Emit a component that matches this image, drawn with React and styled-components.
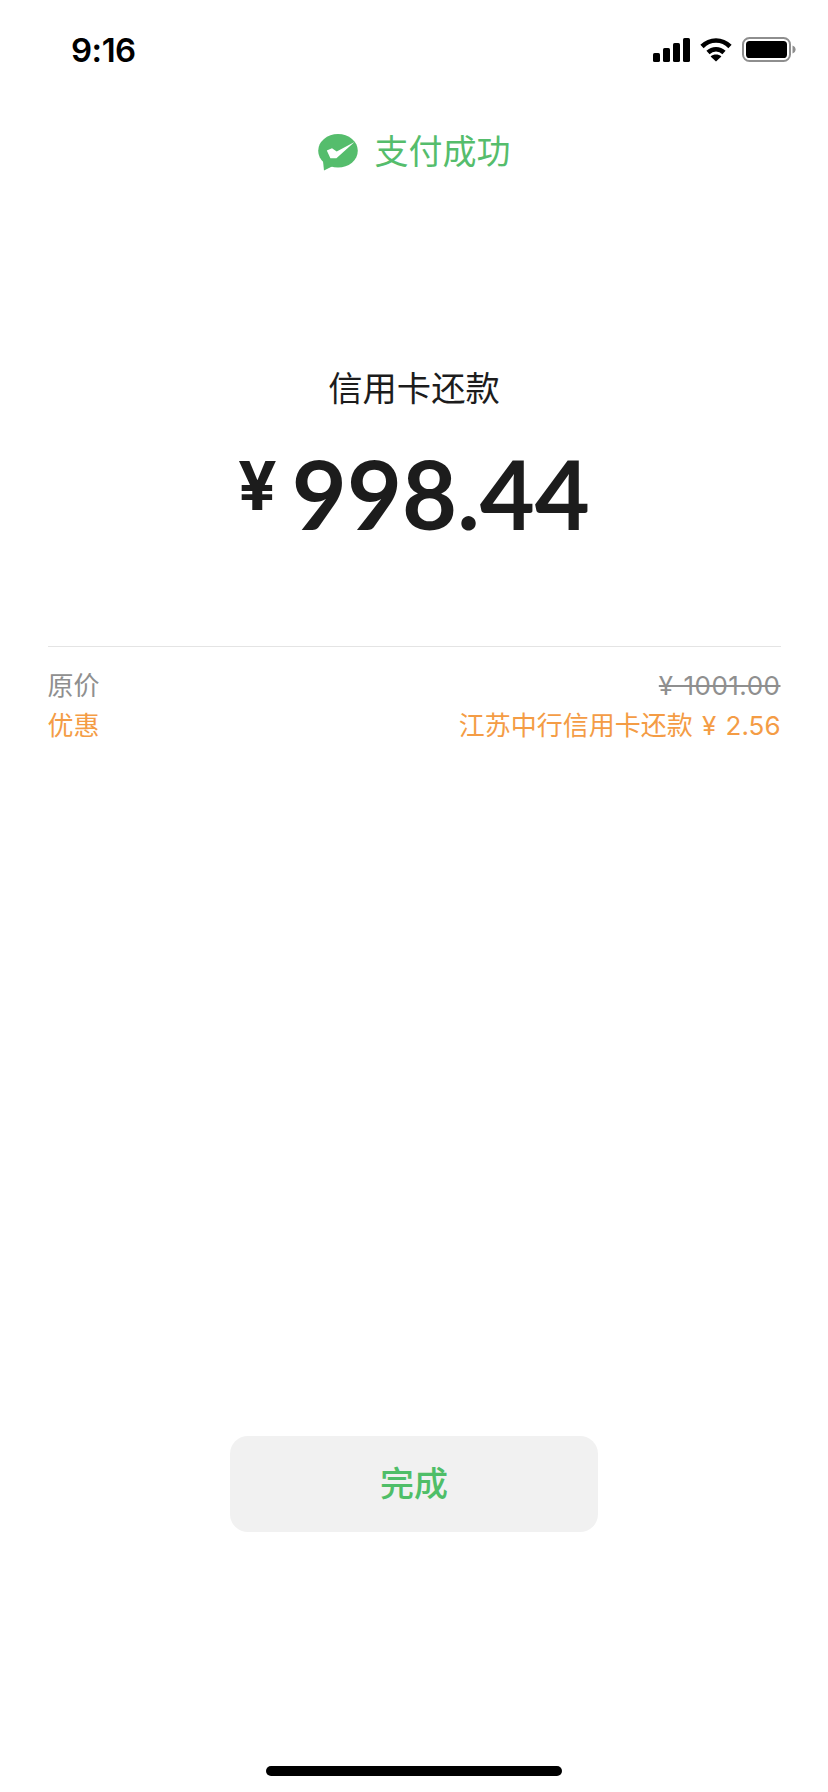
import React from "react";
import styled, { createGlobalStyle } from "styled-components";

const cjk = `"Noto Sans CJK SC", "Noto Sans", sans-serif`;

const GlobalStyle = createGlobalStyle`
  html, body {
    margin: 0;
    padding: 0;
    background: #ffffff;
  }
`;

const SignalIcon = () => (
  <svg width="37" height="24" viewBox="0 0 37 24" fill="#000">
    <rect x="0" y="15" width="7" height="9" rx="1.6" />
    <rect x="10" y="10" width="7" height="14" rx="1.6" />
    <rect x="20" y="5" width="7" height="19" rx="1.6" />
    <rect x="30" y="0" width="7" height="24" rx="1.6" />
  </svg>
);

const WifiIcon = () => (
  <svg width="32" height="25" viewBox="0 0 32 25" fill="none" stroke="#000" strokeWidth="4.6">
    <path d="M2 9.5C10 1.5 22 1.5 30 9.5" />
    <path d="M8 15.5C12.5 11.2 19.5 11.2 24 15.5" />
    <path d="M10.6 19.4L16 24.4L21.4 19.4C18.4 16.8 13.6 16.8 10.6 19.4Z" fill="#000" stroke="none" />
  </svg>
);

const BatteryIcon = () => (
  <svg width="54" height="25" viewBox="0 0 54 25">
    <rect x="1" y="1" width="47" height="23" rx="6.5" fill="none" stroke="#8e8e8e" strokeWidth="2" />
    <rect x="4" y="4" width="41" height="17" rx="3.6" fill="#000" />
    <path d="M50.5 8.5C52.5 9.2 53.6 10.6 53.6 12.5C53.6 14.4 52.5 15.8 50.5 16.5Z" fill="#8e8e8e" />
  </svg>
);

const PayLogo = () => (
  <svg width="40" height="37" viewBox="0 0 40 37">
    <ellipse cx="20" cy="16.8" rx="19.8" ry="16.8" fill="#55bd6c" />
    <path d="M5 27L6 36.5L15 32Z" fill="#55bd6c" />
    <path d="M8.8 16.4L14 14.2L18.7 17.6L36.5 8L18.4 24.2H12.4Z" fill="#fff" />
  </svg>
);

const App = () => {
  return (
    <Page>
      <GlobalStyle />
      <StatusBar>
        <Clock>9:16</Clock>
        <StatusIcons>
          <SignalIcon />
          <WifiIcon />
          <BatteryIcon />
        </StatusIcons>
      </StatusBar>
      <ResultHeader>
        <PayLogo />
        <ResultText>支付成功</ResultText>
      </ResultHeader>
      <Merchant>信用卡还款</Merchant>
      <Amount>
        <Currency>¥</Currency>
        <Digits>998.44</Digits>
      </Amount>
      <Details>
        <Row>
          <span>原价</span>
          <Struck>¥ 1001.00</Struck>
        </Row>
        <Row $accent>
          <span>优惠</span>
          <span>江苏中行信用卡还款 ¥ 2.56</span>
        </Row>
      </Details>
      <DoneButton type="button">完成</DoneButton>
      <HomeIndicator />
    </Page>
  );
};

const Page = styled.div`
  display: flex;
  flex-direction: column;
  align-items: center;
  width: 828px;
  height: 1792px;
  overflow: hidden;
  background: #ffffff;
  font-family: ${cjk};
`;
const StatusBar = styled.div`
  display: flex;
  align-items: center;
  justify-content: space-between;
  box-sizing: border-box;
  width: 100%;
  height: 99px;
  padding: 0 32px 0 71px;
`;
const Clock = styled.span`
  font-family: Inter, "Liberation Sans", sans-serif;
  font-size: 33px;
  font-weight: 600;
  letter-spacing: -0.5px;
  color: #000;
`;
const StatusIcons = styled.div`
  display: flex;
  align-items: center;
  gap: 10px;
`;
const ResultHeader = styled.div`
  display: flex;
  align-items: center;
  gap: 17px;
  height: 46px;
  margin-top: 30px;
`;
const ResultText = styled.span`
  padding-bottom: 4px;
  font-size: 34px;
  font-weight: 400;
  line-height: 46px;
  color: #55bd6c;
`;
const Merchant = styled.div`
  margin-top: 188px;
  font-size: 34.3px;
  font-weight: 400;
  line-height: 46px;
  color: #1c1c1c;
`;
const Amount = styled.div`
  display: flex;
  align-items: flex-start;
  gap: 15px;
  height: 120px;
  margin-top: 24px;
  color: #1c1c1c;
`;
const Currency = styled.span`
  font-family: Inter, sans-serif;
  font-size: 68px;
  font-weight: 700;
  line-height: 120px;
  transform: translateY(-8px);
`;
const Digits = styled.span`
  font-family: Lato, sans-serif;
  font-size: 95px;
  font-weight: 700;
  line-height: 120px;
`;
const Details = styled.div`
  box-sizing: border-box;
  width: 733px;
  margin-top: 93px;
  padding-top: 21px;
  border-top: 1px solid #e4e4e4;
  font-family: Inter, ${cjk};
`;
const Row = styled.div`
  display: flex;
  justify-content: space-between;
  height: 40px;
  font-size: 26px;
  font-weight: 400;
  line-height: 36px;
  word-spacing: 2px;
  color: ${(props) => (props.$accent ? "#f49c45" : "#8f8f8f")};
`;
const Struck = styled.span`
  letter-spacing: 0.5px;
  text-decoration: line-through;
`;
const DoneButton = styled.button`
  width: 368px;
  height: 96px;
  margin-top: auto;
  padding: 0 0 6px;
  border: none;
  border-radius: 18px;
  background: #f1f1f1;
  font-family: ${cjk};
  font-size: 34px;
  font-weight: 500;
  color: #4fbe68;
`;
const HomeIndicator = styled.div`
  width: 296px;
  height: 10px;
  margin-top: 234px;
  margin-bottom: 16px;
  border-radius: 5px;
  background: #000;
`;

export default App;
